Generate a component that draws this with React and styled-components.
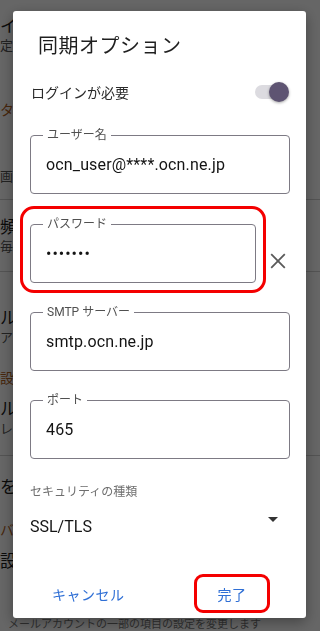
import React from "react";
import styled, { createGlobalStyle } from "styled-components";

const GlobalStyle = createGlobalStyle`
  html, body {
    margin: 0;
    padding: 0;
  }
  body {
    font-family: Roboto, "Noto Sans CJK JP", "Noto Sans", sans-serif;
    background: #ffffff;
  }
  * {
    box-sizing: border-box;
  }
`;

/* ---------- settings page behind the dialog ---------- */

const Page = styled.div`
  width: 320px;
  height: 631px;
  overflow: hidden;
  background: #ffffff;
  display: flex;
  flex-direction: column;
`;

const Item = styled.div`
  height: ${(p) => p.$h}px;
  padding: ${(p) => p.$pt || 0}px 0 0 0;
  border-bottom: ${(p) => (p.$line ? "1px solid #d0d0d0" : "none")};
  display: flex;
  flex-direction: column;
  flex-shrink: 0;
`;

// only the first glyph peeks out from behind the dialog
const ItemTitle = styled.div`
  width: 13px;
  overflow: hidden;
  font-size: 17px;
  line-height: 22px;
  color: #1c1c1c;
  white-space: nowrap;
`;

const ItemSub = styled.div`
  width: 13px;
  overflow: hidden;
  font-size: 13px;
  line-height: 18px;
  color: #555555;
  white-space: nowrap;
`;

const SectionHead = styled.div`
  width: 13px;
  overflow: hidden;
  font-size: 14px;
  line-height: 20px;
  color: #b0601c;
  white-space: nowrap;
  padding-top: ${(p) => p.$pt || 0}px;
  height: ${(p) => p.$h}px;
  flex-shrink: 0;
`;

const FootNote = styled.div`
  margin-top: auto;
  height: 12px;
  padding-left: 8px;
  font-size: 11px;
  line-height: 12px;
  color: #777777;
  white-space: nowrap;
  overflow: hidden;
`;

/* ---------- dialog ---------- */

const Scrim = styled.div`
  position: fixed;
  inset: 0;
  background: rgba(0, 0, 0, 0.6);
  padding: 11px 14px 13px 13px;
  display: flex;
`;

const Dialog = styled.div`
  width: 293px;
  height: 607px;
  background: #ffffff;
  border-radius: 3px;
  box-shadow: 0 4px 14px rgba(0, 0, 0, 0.35);
  padding: 0 16px 5px 17px;
  display: flex;
  flex-direction: column;
`;

const Title = styled.h2`
  margin: 21px 0 0 8px;
  font-size: 20px;
  line-height: 28px;
  font-weight: 400;
  color: #1f1f1f;
  letter-spacing: 0.5px;
`;

const ToggleRow = styled.div`
  margin-top: 20px;
  height: 24px;
  display: flex;
  align-items: center;
  justify-content: space-between;
  padding: 0 3px 0 1px;
  font-size: 14px;
  color: #2a2a2a;
`;

const Track = styled.span`
  position: relative;
  width: 32px;
  height: 14px;
  border-radius: 7px;
  background: #dcdbe0;
  &::after {
    content: "";
    position: absolute;
    right: -2px;
    top: -3px;
    width: 20px;
    height: 20px;
    border-radius: 50%;
    background: #5e5472;
    box-shadow: 0 1px 3px rgba(0, 0, 0, 0.35);
  }
`;

const Field = styled.fieldset`
  margin: ${(p) => p.$mt}px 0 0 0;
  width: ${(p) => p.$w || 260}px;
  height: 67px;
  padding: 0 15px;
  border: 1px solid #7d7a84;
  border-radius: 4px;
  min-width: 0;
  ${(p) =>
    p.$marked &&
    `
    outline: 3px solid #f40000;
    outline-offset: 7px;
  `}
`;

const Legend = styled.legend`
  font-size: 12px;
  line-height: 16px;
  color: #505050;
  padding: 0 4px;
  margin-left: -3px;
`;

const Value = styled.div`
  padding-top: 10px;
  font-size: 16px;
  line-height: 24px;
  color: #141414;
  letter-spacing: ${(p) => (p.$dots ? "1px" : "0.15px")};
  white-space: nowrap;
`;

const FieldRow = styled.div`
  display: flex;
  align-items: flex-end;
`;

const ClearButton = styled.button`
  border: none;
  background: none;
  padding: 0;
  margin: 0 0 14px 14px;
  width: 16px;
  height: 16px;
  display: flex;
  color: #5a5a5a;
`;

const SelectLabel = styled.div`
  margin-top: 25px;
  font-size: 12px;
  line-height: 16px;
  color: #6e6e6e;
`;

const SelectRow = styled.div`
  margin-top: 14px;
  height: 24px;
  display: flex;
  align-items: center;
  justify-content: space-between;
  padding-right: 5px;
  font-size: 16px;
  color: #141414;
`;

const Arrow = styled.svg`
  width: 24px;
  height: 24px;
  margin-top: -14px;
  fill: #333333;
`;

const Actions = styled.div`
  margin-top: auto;
  display: flex;
  justify-content: space-between;
  align-items: center;
  padding: 0 20px 0 11px;
`;

const ActionButton = styled.button`
  height: 39px;
  min-width: ${(p) => (p.$marked ? 76 : 0)}px;
  padding: 0 8px;
  background: none;
  border: ${(p) => (p.$marked ? "3px solid #f40000" : "3px solid transparent")};
  border-radius: 9px;
  font-family: "Noto Sans CJK JP", sans-serif;
  font-size: 14px;
  color: #2f6fd5;
  letter-spacing: 0.5px;
`;

export default function App() {
  return (
    <>
      <GlobalStyle />
      <Page>
        <Item $h={80} $pt={15}>
          <ItemTitle>イメージの設定</ItemTitle>
          <ItemSub>定期的に確認します</ItemSub>
        </Item>
        <SectionHead $h={60} $pt={20}>タイトル</SectionHead>
        <Item $h={60} $pt={28} $line>
          <ItemSub>画像を表示</ItemSub>
        </Item>
        <Item $h={72} $pt={16} $line>
          <ItemTitle>頻度</ItemTitle>
          <ItemSub>毎日</ItemSub>
        </Item>
        <Item $h={86} $pt={35}>
          <ItemTitle>ルール</ItemTitle>
          <ItemSub>アカウント</ItemSub>
        </Item>
        <SectionHead $h={28} $pt={10}>設定</SectionHead>
        <Item $h={70} $pt={12} $line>
          <ItemTitle>ルール</ItemTitle>
          <ItemSub>レイアウト</ItemSub>
        </Item>
        <Item $h={56} $pt={20}>
          <ItemTitle>をクリア</ItemTitle>
        </Item>
        <SectionHead $h={30} $pt={8}>バージョン</SectionHead>
        <Item $h={36} $pt={8}>
          <ItemTitle>設定</ItemTitle>
        </Item>
        <FootNote>メールアカウントの一部の項目の設定を変更します</FootNote>
      </Page>

      <Scrim>
        <Dialog>
          <Title>同期オプション</Title>

          <ToggleRow>
            <span>ログインが必要</span>
            <Track />
          </ToggleRow>

          <Field $mt={23}>
            <Legend>ユーザー名</Legend>
            <Value>ocn_user@****.ocn.ne.jp</Value>
          </Field>

          <FieldRow>
            <Field $mt={22} $w={226} $marked>
              <Legend>パスワード</Legend>
              <Value $dots>•••••••</Value>
            </Field>
            <ClearButton aria-label="clear">
              <svg width="16" height="16" viewBox="0 0 16 16">
                <path
                  d="M1.2 1.2 L14.8 14.8 M14.8 1.2 L1.2 14.8"
                  stroke="currentColor"
                  strokeWidth="1.8"
                  fill="none"
                />
              </svg>
            </ClearButton>
          </FieldRow>

          <Field $mt={21}>
            <Legend>SMTP サーバー</Legend>
            <Value>smtp.ocn.ne.jp</Value>
          </Field>

          <Field $mt={21}>
            <Legend>ポート</Legend>
            <Value>465</Value>
          </Field>

          <SelectLabel>セキュリティの種類</SelectLabel>
          <SelectRow>
            <span>SSL/TLS</span>
            <Arrow viewBox="0 0 24 24">
              <path d="M7 10l5 5 5-5z" />
            </Arrow>
          </SelectRow>

          <Actions>
            <ActionButton>キャンセル</ActionButton>
            <ActionButton $marked>完了</ActionButton>
          </Actions>
        </Dialog>
      </Scrim>
    </>
  );
}
